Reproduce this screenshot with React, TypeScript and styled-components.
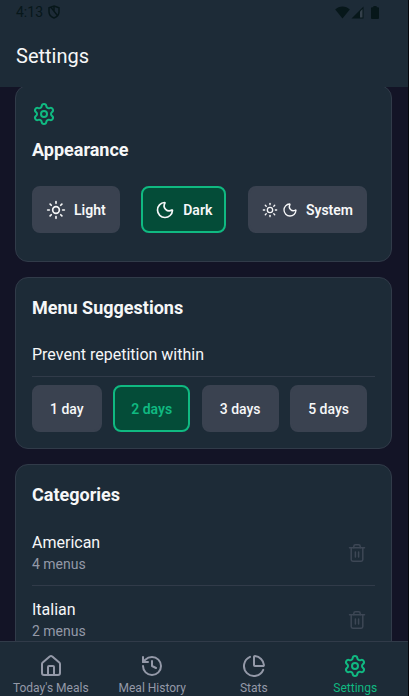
import React, { useState } from "react";
import styled, { createGlobalStyle, css } from "styled-components";
import { ChartPie, History, House, Moon, Settings, Sun } from "lucide-react";

const color = {
  page: "#131426",
  surface: "#1d2b37",
  border: "#313b49",
  button: "#3a4250",
  green: "#10b981",
  greenDark: "#044c38",
  text: "#f6f7f8",
  muted: "#9499a8",
  faint: "#3d4755",
  status: "#07171a",
};

const GlobalStyle = createGlobalStyle`
  *, *::before, *::after { box-sizing: border-box; }
  body {
    margin: 0;
    background: ${color.page};
    color: ${color.text};
    font-family: Roboto, "Liberation Sans", sans-serif;
  }
  button { font: inherit; color: inherit; cursor: pointer; }
  h1, h2, p, ul { margin: 0; padding: 0; }
`;

const Screen = styled.div`
  display: flex;
  flex-direction: column;
  height: 100vh;
  border-right: 1px solid #05060a;
  overflow: hidden;
`;

const Header = styled.header`
  flex: none;
  position: relative;
  background: ${color.surface};
`;

const StatusBar = styled.div`
  display: flex;
  align-items: center;
  justify-content: space-between;
  height: 24px;
  padding: 0 29px 0 16px;
  font-size: 14px;
  line-height: 24px;
  color: ${color.status};
`;

const StatusGroup = styled.div<{ $gap: number }>`
  display: flex;
  align-items: center;
  gap: ${({ $gap }) => $gap}px;
`;

const Title = styled.h1`
  padding: 16px 16px 15px;
  font-size: 20px;
  line-height: 32px;
  font-weight: 400;
`;

const Main = styled.main`
  flex: 1;
  min-height: 0;
  overflow: hidden;
`;

const Cards = styled.div`
  display: flex;
  flex-direction: column;
  gap: 15px;
  margin-top: -2px;
  padding: 0 16px 16px 15px;
`;

const Card = styled.section`
  padding: 16px;
  border: 1px solid ${color.border};
  border-radius: 13px;
  background: ${color.surface};
`;

const CardIcon = styled.div`
  display: flex;
  margin-bottom: 10px;
  color: ${color.green};
`;

const CardTitle = styled.h2`
  margin-bottom: 10px;
  font-size: 18px;
  line-height: 28px;
  font-weight: 700;
`;

const Options = styled.div<{ $spaced?: boolean }>`
  display: flex;
  justify-content: space-between;
  padding-right: 8px;
  ${({ $spaced }) => $spaced && css`
    margin: 22px 0 12px;
  `}
`;

const Option = styled.button<{ $wide?: boolean; $active: boolean }>`
  display: flex;
  align-items: center;
  gap: 8px;
  height: 47px;
  padding: 0 ${({ $wide }) => ($wide ? 12 : 16)}px;
  border: 2px solid ${({ $active }) => ($active ? color.green : color.button)};
  border-radius: 8px;
  background: ${({ $active }) => ($active ? color.greenDark : color.button)};
  font-size: 14px;
  line-height: 20px;
  font-weight: ${({ $wide, $active }) => ($wide || $active ? 600 : 500)};
  color: ${({ $wide, $active }) => (!$wide && $active ? color.green : color.text)};
`;

const IconPair = styled.span`
  display: flex;
  gap: 4px;
`;

const Label = styled.p`
  margin-bottom: 8px;
  padding: 13px 0 11px;
  border-bottom: 1px solid ${color.border};
  font-size: 16px;
  line-height: 20px;
`;

const CategoryList = styled.ul`
  list-style: none;
`;

const CategoryRow = styled.li`
  display: flex;
  align-items: center;
  justify-content: space-between;
  padding: 13px 0 11px;
  border-bottom: 1px solid ${color.border};
`;

const CategoryName = styled.p`
  font-size: 16px;
  line-height: 22px;
`;

const CategoryCount = styled.p`
  font-size: 14px;
  line-height: 20px;
  color: ${color.muted};
`;

const DeleteButton = styled.button`
  display: flex;
  padding: 8px;
  border: 0;
  background: none;
  color: ${color.faint};
`;

const TabBar = styled.nav`
  flex: none;
  position: relative;
  display: grid;
  grid-template-columns: repeat(4, 1fr);
  padding: 12px 2px 0 0;
  border-top: 1px solid ${color.border};
  background: ${color.surface};
`;

const Tab = styled.a<{ $active: boolean }>`
  display: flex;
  flex-direction: column;
  align-items: center;
  gap: 2px;
  font-size: 12px;
  line-height: 16px;
  white-space: nowrap;
  text-decoration: none;
  color: ${({ $active }) => ($active ? color.green : color.muted)};
`;

const ShieldIcon = () => (
  <svg width="12" height="14" viewBox="0 0 12 14" fill="none" stroke="currentColor" strokeWidth="1.5" aria-hidden="true">
    <path d="M6 1 11 2.8V6.8C11 9.8 9 12 6 13 3 12 1 9.8 1 6.8V2.8Z" />
    <path d="M3 2.4 9.6 10.8M6 1.2V6" />
  </svg>
);

const WifiIcon = () => (
  <svg width="15" height="13" viewBox="0 0 15 13" fill="currentColor" aria-hidden="true">
    <path d="M7.5 12.6 0.2 3.6C2.2 1.6 4.8 0.5 7.5 0.5S12.8 1.6 14.8 3.6Z" />
  </svg>
);

const SignalIcon = () => (
  <svg width="13" height="13" viewBox="0 0 13 13" aria-hidden="true">
    <path d="M12.5 0.5V12.5H0.5Z" fill="currentColor" />
    <path d="M9 5.5 11.5 3V11.5H9Z" fill="#34404b" />
  </svg>
);

const BatteryIcon = () => (
  <svg width="8" height="13" viewBox="0 0 8 13" fill="currentColor" aria-hidden="true">
    <path d="M2.4 0H5.6V1.3H7A1 1 0 0 1 8 2.3V12A1 1 0 0 1 7 13H1A1 1 0 0 1 0 12V2.3A1 1 0 0 1 1 1.3H2.4Z" />
  </svg>
);

const TrashIcon = () => (
  <svg
    width="20"
    height="20"
    viewBox="0 0 20 20"
    fill="none"
    stroke="currentColor"
    strokeWidth="1.5"
    strokeLinecap="round"
    strokeLinejoin="round"
    aria-hidden="true"
  >
    <path d="M2.5 4.7H17.5" />
    <path d="M4.2 4.7V16.6A1.6 1.6 0 0 0 5.8 18.2H14.2A1.6 1.6 0 0 0 15.8 16.6V4.7" />
    <path d="M6.8 4.7V3.4A1.6 1.6 0 0 1 8.4 1.8H11.6A1.6 1.6 0 0 1 13.2 3.4V4.7" />
    <path d="M8.4 9V14M11.6 9V14" />
  </svg>
);

const themes = [
  { name: "Light", icon: <Sun size={20} /> },
  { name: "Dark", icon: <Moon size={20} /> },
  {
    name: "System",
    icon: (
      <IconPair>
        <Sun size={16} />
        <Moon size={16} />
      </IconPair>
    ),
  },
];

const intervals = ["1 day", "2 days", "3 days", "5 days"];

const categories = [
  { name: "American", count: "4 menus" },
  { name: "Italian", count: "2 menus" },
];

const tabs = [
  { name: "Today's Meals", Icon: House },
  { name: "Meal History", Icon: History },
  { name: "Stats", Icon: ChartPie },
  { name: "Settings", Icon: Settings },
];

export default function App() {
  const [theme, setTheme] = useState("Dark");
  const [interval, setRepeatInterval] = useState("2 days");

  return (
    <>
      <GlobalStyle />
      <Screen>
        <Header>
          <StatusBar>
            <StatusGroup $gap={5}>
              <span>4:13</span>
              <ShieldIcon />
            </StatusGroup>
            <StatusGroup $gap={1}>
              <WifiIcon />
              <StatusGroup $gap={7}>
                <SignalIcon />
                <BatteryIcon />
              </StatusGroup>
            </StatusGroup>
          </StatusBar>
          <Title>Settings</Title>
        </Header>
        <Main>
          <Cards>
            <Card>
              <CardIcon>
                <Settings size={24} />
              </CardIcon>
              <CardTitle id="appearance">Appearance</CardTitle>
              <Options $spaced role="group" aria-labelledby="appearance">
                {themes.map(({ name, icon }) => (
                  <Option
                    key={name}
                    type="button"
                    $wide
                    $active={theme === name}
                    aria-pressed={theme === name}
                    onClick={() => setTheme(name)}
                  >
                    {icon}
                    {name}
                  </Option>
                ))}
              </Options>
            </Card>
            <Card>
              <CardTitle>Menu Suggestions</CardTitle>
              <Label id="repetition">Prevent repetition within</Label>
              <Options role="group" aria-labelledby="repetition">
                {intervals.map((name) => (
                  <Option
                    key={name}
                    type="button"
                    $active={interval === name}
                    aria-pressed={interval === name}
                    onClick={() => setRepeatInterval(name)}
                  >
                    {name}
                  </Option>
                ))}
              </Options>
            </Card>
            <Card>
              <CardTitle>Categories</CardTitle>
              <CategoryList>
                {categories.map(({ name, count }) => (
                  <CategoryRow key={name}>
                    <div>
                      <CategoryName>{name}</CategoryName>
                      <CategoryCount>{count}</CategoryCount>
                    </div>
                    <DeleteButton type="button" aria-label={`Delete ${name}`}>
                      <TrashIcon />
                    </DeleteButton>
                  </CategoryRow>
                ))}
              </CategoryList>
            </Card>
          </Cards>
        </Main>
        <TabBar>
          {tabs.map(({ name, Icon }) => (
            <Tab key={name} href="#" $active={name === "Settings"} aria-current={name === "Settings" ? "page" : undefined}>
              <Icon size={24} />
              {name}
            </Tab>
          ))}
        </TabBar>
      </Screen>
    </>
  );
}
